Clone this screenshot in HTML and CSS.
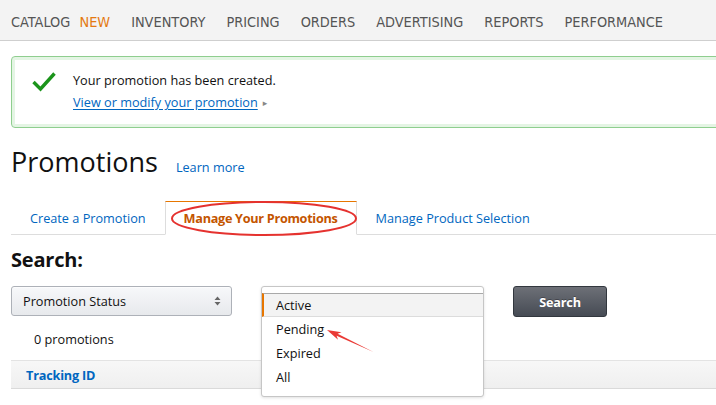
FILE: index.html
```html
<!DOCTYPE html>
<html>
<head>
<meta charset="utf-8">
<link rel="stylesheet" href="styles.css">
</head>
<body>
<div class="page">
  <nav class="topnav">
    <span class="nav-item">CATALOG <span class="nav-new">NEW</span></span>
    <span class="nav-item">INVENTORY</span>
    <span class="nav-item">PRICING</span>
    <span class="nav-item">ORDERS</span>
    <span class="nav-item">ADVERTISING</span>
    <span class="nav-item">REPORTS</span>
    <span class="nav-item">PERFORMANCE</span>
  </nav>

  <main class="content">
    <div class="alert">
      <svg class="alert-icon" width="24" height="20" viewBox="0 0 24 20">
        <path d="M1.5 10 L8.5 17 L22.5 1.5" fill="none" stroke="#1b941b" stroke-width="3.4"/>
      </svg>
      <div class="alert-body">
        <div class="alert-line">Your promotion has been created.</div>
        <div class="alert-line alert-link-line"><a class="alert-link">View or modify your promotion</a><span class="caret">&#9656;</span></div>
      </div>
    </div>

    <div class="title-row">
      <h1 class="title">Promotions</h1>
      <a class="learn">Learn more</a>
    </div>

    <div class="tabs">
      <div class="tab">Create a Promotion</div>
      <div class="tab tab-active">Manage Your Promotions</div>
      <div class="tab">Manage Product Selection</div>
    </div>

    <h2 class="search-title">Search:</h2>

    <div class="search-row">
      <div class="select">
        <span>Promotion Status</span>
        <svg class="updown" width="7" height="10" viewBox="0 0 7 10">
          <path d="M0.5 4 L3.5 0.5 L6.5 4 Z M0.5 6 L3.5 9.5 L6.5 6 Z" fill="#666"/>
        </svg>
      </div>
      <div class="select-slot">
        <ul class="dropdown">
          <li class="opt opt-active">Active</li>
          <li class="opt">Pending</li>
          <li class="opt">Expired</li>
          <li class="opt">All</li>
        </ul>
      </div>
      <button class="search-btn">Search</button>
    </div>

    <div class="count">0 promotions</div>

    <div class="table-head">
      <span class="th">Tracking ID</span>
    </div>
  </main>

  <svg class="annotations" width="716" height="405" viewBox="0 0 716 405">
    <ellipse cx="264" cy="218.5" rx="92" ry="16.5" fill="none" stroke="#e5322f" stroke-width="2"/>
    <polygon points="327,330 341.5,332.2 337.6,333.8 373.5,352 336.6,335.7 338,339.8" fill="#ea3a35"/>
  </svg>
</div>
</body>
</html>
```

FILE: styles.css
```css
html, body {
  margin: 0;
  padding: 0;
  background: #fff;
  overflow: hidden;
}

.page {
  position: relative;
  width: 716px;
  height: 405px;
  overflow: hidden;
  font-family: "Open Sans", "DejaVu Sans", sans-serif;
  font-size: 12.7px;
  color: #111;
}

.topnav {
  display: flex;
  align-items: center;
  height: 41px;
  padding: 4px 0 0 11px;
  box-sizing: border-box;
  background: #f3f3f3;
  border-bottom: 1px solid #cfcfcf;
  font-family: "Liberation Sans Narrow", "DejaVu Sans Condensed", "Roboto", sans-serif;
  font-size: 14.4px;
  color: #555;
  white-space: nowrap;
}

.nav-item {
  margin-right: 21px;
}

.nav-new {
  color: #e47911;
  margin-left: 5px;
}

.content {
  width: 760px;
  padding-left: 11px;
}

.alert {
  display: flex;
  align-items: flex-start;
  margin-top: 15px;
  padding: 13px 0 14px 20px;
  border: 1px solid #8fce8f;
  border-radius: 4px;
  box-shadow: inset 0 0 0 3px #e4f5e4;
}

.alert-icon {
  margin-top: 2px;
  margin-right: 17px;
  flex: none;
}

.alert-line {
  line-height: 20px;
  color: #111;
}

.alert-link-line {
  margin-top: 2px;
}

.alert-link {
  color: #0066c0;
  text-decoration: underline;
  text-underline-offset: 2px;
}

.caret {
  color: #888;
  font-size: 9px;
  margin-left: 5px;
  vertical-align: 1px;
}

.title-row {
  display: flex;
  align-items: baseline;
  margin-top: 14px;
}

.title {
  margin: 0;
  font-size: 27px;
  font-weight: 400;
  line-height: 40px;
  color: #111;
}

.learn {
  margin-left: 18px;
  color: #0066c0;
}

.tabs {
  display: flex;
  margin-top: 19px;
  border-bottom: 1px solid #ddd;
}

.tab {
  padding: 6px 18px 6px 18px;
  line-height: 20px;
  border-top: 1px solid transparent;
  border-left: 1px solid transparent;
  border-right: 1px solid transparent;
  margin-bottom: -1px;
  border-bottom: 1px solid transparent;
  color: #0066c0;
  white-space: nowrap;
}

.tab-active {
  border-top: 1px solid #e77600;
  border-left: 1px solid #ddd;
  border-right: 1px solid #ddd;
  border-bottom: 1px solid #fff;
  color: #c45500;
  font-weight: 700;
  letter-spacing: -0.3px;
}

.search-title {
  margin: 11px 0 0 0;
  font-size: 20px;
  font-weight: 700;
  line-height: 28px;
  color: #111;
  letter-spacing: -0.2px;
}

.search-row {
  display: flex;
  align-items: flex-start;
  gap: 29px;
  margin-top: 12px;
}

.select {
  display: flex;
  align-items: center;
  justify-content: space-between;
  box-sizing: border-box;
  width: 221px;
  height: 30px;
  padding: 0 10px 0 11px;
  border: 1px solid #adb1b8;
  border-radius: 3px;
  background: linear-gradient(#f7f8fa, #e7e9ec);
  box-shadow: 0 1px 0 rgba(255,255,255,0.6) inset;
  color: #111;
}

.select-slot {
  position: relative;
  width: 223px;
  height: 30px;
}

.dropdown {
  position: absolute;
  left: 0;
  top: 0;
  box-sizing: border-box;
  width: 223px;
  margin: 0;
  padding: 6px 0 7px 0;
  list-style: none;
  background: #fff;
  border: 1px solid #c6c6c6;
  border-radius: 3px;
  box-shadow: 0 1px 3px rgba(0,0,0,0.12);
  z-index: 2;
}

.opt {
  line-height: 24px;
  padding-left: 14px;
  color: #111;
}

.opt-active {
  line-height: 22px;
  padding-left: 12px;
  background: #f3f3f3;
  border-top: 1px solid #a9a9a9;
  border-bottom: 1px solid #dcdcdc;
  border-left: 2px solid #e77600;
}

.search-btn {
  box-sizing: border-box;
  width: 94px;
  height: 31px;
  padding: 0;
  border: 1px solid #32373e;
  border-radius: 3px;
  background: linear-gradient(#6d7077, #464b54);
  color: #fff;
  font-family: "Open Sans", "DejaVu Sans", sans-serif;
  font-size: 12.7px;
  font-weight: 700;
  letter-spacing: -0.2px;
  text-shadow: 0 -1px 0 rgba(0,0,0,0.3);
}

.count {
  margin-top: 12px;
  padding-left: 23px;
  line-height: 20px;
  color: #111;
}

.table-head {
  margin-top: 11px;
  padding: 4px 0 3px 15px;
  line-height: 20px;
  border-top: 1px solid #e3e3e3;
  border-bottom: 1px solid #dadada;
  background: linear-gradient(#f7f7f7, #efefef);
}

.th {
  color: #0066c0;
  font-weight: 700;
  letter-spacing: -0.2px;
}

.annotations {
  position: absolute;
  left: 0;
  top: 0;
  pointer-events: none;
  z-index: 5;
}
```
